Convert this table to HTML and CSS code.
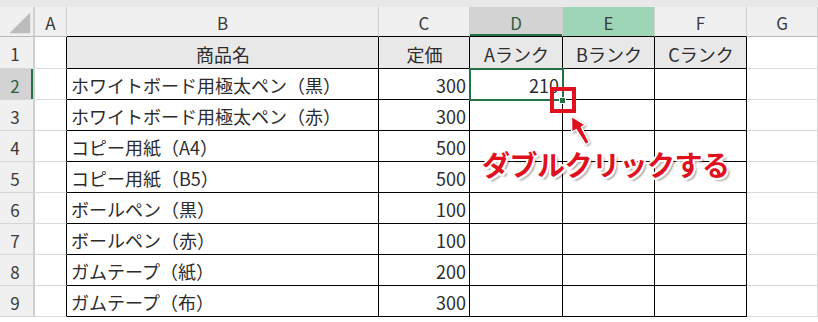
FILE: index.html
```html
<!DOCTYPE html>
<html lang="ja">
<head>
<meta charset="utf-8">
<link rel="stylesheet" href="styles.css">
</head>
<body>
<div class="sheet">
  <div class="band"></div>
  <div class="grid">
    <div class="ch corner"><svg width="35" height="30" viewBox="0 0 35 30"><polygon points="32,5 32,27 10,27" fill="#bcbcbc"/></svg></div>
    <div class="ch">A</div>
    <div class="ch tb">B</div>
    <div class="ch tb">C</div>
    <div class="ch tb sel">D</div>
    <div class="ch tb hov">E</div>
    <div class="ch tb">F</div>
    <div class="ch">G</div>

    <div class="rh">1</div><div class="c a"></div>
    <div class="c t hd ctr">商品名</div><div class="c t hd ctr">定価</div><div class="c t hd ctr">Aランク</div><div class="c t hd ctr">Bランク</div><div class="c t hd ctr">Cランク</div><div class="c"></div>

    <div class="rh rsel">2</div><div class="c a"></div>
    <div class="c t">ホワイトボード用極太ペン（黒）</div><div class="c t num">300</div><div class="c t num">210</div><div class="c t"></div><div class="c t"></div><div class="c"></div>

    <div class="rh">3</div><div class="c a"></div>
    <div class="c t">ホワイトボード用極太ペン（赤）</div><div class="c t num">300</div><div class="c t"></div><div class="c t"></div><div class="c t"></div><div class="c"></div>

    <div class="rh">4</div><div class="c a"></div>
    <div class="c t">コピー用紙（A4）</div><div class="c t num">500</div><div class="c t"></div><div class="c t"></div><div class="c t"></div><div class="c"></div>

    <div class="rh">5</div><div class="c a"></div>
    <div class="c t">コピー用紙（B5）</div><div class="c t num">500</div><div class="c t"></div><div class="c t"></div><div class="c t"></div><div class="c"></div>

    <div class="rh">6</div><div class="c a"></div>
    <div class="c t">ボールペン（黒）</div><div class="c t num">100</div><div class="c t"></div><div class="c t"></div><div class="c t"></div><div class="c"></div>

    <div class="rh">7</div><div class="c a"></div>
    <div class="c t">ボールペン（赤）</div><div class="c t num">100</div><div class="c t"></div><div class="c t"></div><div class="c t"></div><div class="c"></div>

    <div class="rh">8</div><div class="c a"></div>
    <div class="c t">ガムテープ（紙）</div><div class="c t num">200</div><div class="c t"></div><div class="c t"></div><div class="c t"></div><div class="c"></div>

    <div class="rh">9</div><div class="c a"></div>
    <div class="c t">ガムテープ（布）</div><div class="c t num">300</div><div class="c t"></div><div class="c t"></div><div class="c t"></div><div class="c"></div>
  </div>

  <div class="selection"></div>
  <div class="handle"></div>
  <div class="redbox"></div>
  <svg class="arrow" width="40" height="40" viewBox="0 0 40 40">
    <polygon points="11.5,6.5 25.3,14.8 21.4,17.1 29.3,32.4 25.7,34.6 16.2,19.6 11.7,22.3" fill="#e0101e" stroke="#fff" stroke-width="1.4" stroke-linejoin="round"/>
  </svg>
  <div class="note">ダブルクリックする</div>
</div>
</body>
</html>
```

FILE: styles.css
```css
* { box-sizing: border-box; }
html, body { margin: 0; padding: 0; background: #fff; }
body { font-family: "Noto Sans CJK JP", "Noto Sans", sans-serif; color: #222; }

.sheet { position: relative; width: 818px; height: 322px; overflow: hidden; }
.band { height: 7px; background: #e8e8e8; }

.grid {
  display: grid;
  grid-template-columns: 35px 32px 312px 91px 93px 92px 92px 1fr;
  grid-template-rows: 30px 32px repeat(9, 31px);
}

.ch {
  background: #f0f0f0;
  border-right: 1px solid #d0d0d0;
  border-bottom: 1px solid #b8b8b8;
  display: flex; align-items: center; justify-content: center;
  font-size: 17px; color: #3a3a3a; padding-top: 1px;
}
.ch.tb { border-bottom-color: #000; }
.ch.sel { background: #d3d3d3; box-shadow: inset 0 -2px 0 #217346; color: #2f5c45; }
.ch.hov { background: #9fd5b7; }
.corner { padding: 0; justify-content: flex-start; align-items: flex-start; border-right: 2px solid #d0d0d0; }

.rh {
  background: #f0f0f0;
  border-right: 2px solid #cfcfcf;
  border-bottom: 1px solid #d6d6d6;
  display: flex; align-items: center; justify-content: center;
  font-size: 17px; color: #3a3a3a; padding-top: 2px; padding-right: 3px;
}
.rh.rsel { background: #d3d3d3; box-shadow: inset -2px 0 0 #217346; color: #2f5c45; }

.c {
  border-right: 1px solid #dadada;
  border-bottom: 1px solid #dadada;
  display: flex; align-items: center;
  font-size: 18px; color: #2c2c2c;
  padding: 2px 3px 0 4px; white-space: nowrap; overflow: visible;
}
.c.a { border-right-color: #000; }
.c.t { border-right-color: #000; border-bottom-color: #000; }
.c.hd { background: #e8e8e8; }
.ctr { justify-content: center; }
.num { justify-content: flex-end; padding-right: 3px; }

.selection {
  position: absolute; left: 469px; top: 68px; width: 95px; height: 33px;
  border: 2px solid #217346; pointer-events: none;
}
.handle {
  position: absolute; left: 559px; top: 97px; width: 7px; height: 7px;
  background: #217346; border: 1px solid #fff;
}
.redbox {
  position: absolute; left: 550px; top: 87px; width: 26px; height: 26px;
  border: 4px solid #e0101e;
}
.arrow { position: absolute; left: 560px; top: 110px; filter: drop-shadow(1px 1px 1px rgba(0,0,0,0.35)); }

.note {
  position: absolute; left: 482px; top: 144px;
  font-size: 28px; font-weight: 700; color: #e0101e; letter-spacing: -0.5px;
  text-shadow:
    2px 0 0 #fff, -2px 0 0 #fff, 0 2px 0 #fff, 0 -2px 0 #fff,
    1.5px 1.5px 0 #fff, -1.5px 1.5px 0 #fff, 1.5px -1.5px 0 #fff, -1.5px -1.5px 0 #fff,
    3px 3px 2px rgba(0,0,0,0.35);
}
```
